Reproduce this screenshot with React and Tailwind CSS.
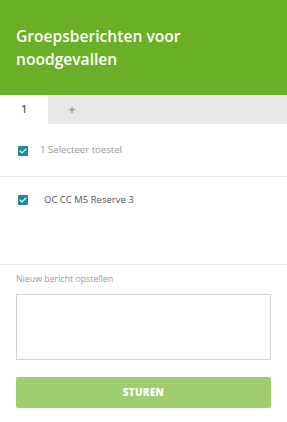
import { useState } from 'react';

function Check() {
  return (
    <span className="flex h-[10px] w-[10px] items-center justify-center rounded-[1px] bg-[#1b87ad]">
      <svg width="8" height="8" viewBox="0 0 8 8" fill="none">
        <path d="M1.3 4.2 L3.1 5.9 L6.7 2.2" stroke="white" strokeWidth="1.3" strokeLinecap="round" strokeLinejoin="round" />
      </svg>
    </span>
  );
}

export default function App() {
  const [message, setMessage] = useState('');

  return (
    <div className="flex h-[422px] w-[287px] flex-col bg-white font-['Open_Sans',sans-serif]">
      {/* Header */}
      <div className="flex h-[95px] items-center bg-[#69b027] px-4 pt-[1px]">
        <h1 className="text-[15.6px] font-semibold leading-[23px] text-white">
          Groepsberichten voor
          <br />
          noodgevallen
        </h1>
      </div>

      {/* Tabs */}
      <div className="flex h-[29px] bg-[#e8e8e8]">
        <div className="flex w-[48px] items-center justify-center bg-white text-[10px] font-semibold text-[#555]">1</div>
        <div className="flex w-[48px] items-center justify-center text-[13px] font-bold text-[#999]">+</div>
      </div>

      {/* Select all */}
      <div className="flex h-[53px] items-center gap-3 border-b border-[#e6e6e6] pl-[18px] pt-[1px]">
        <Check />
        <span className="text-[9.6px] font-medium text-[#999]">1 Selecteer toestel</span>
      </div>

      {/* Device list */}
      <div className="h-[88px] border-b border-[#e6e6e6] pl-[18px] pt-[16px]">
        <div className="flex items-center gap-4">
          <Check />
          <span className="text-[9.5px] text-[#555]">OC CC M5 Reserve 3</span>
        </div>
      </div>

      {/* Compose */}
      <div className="flex flex-col px-4 pt-[8px]">
        <label className="text-[8.8px] text-[#999]">Nieuw bericht opstellen</label>
        <textarea
          value={message}
          onChange={(e) => setMessage(e.target.value)}
          className="mt-[8px] h-[66px] w-full resize-none border border-[#d4d4d4] outline-none"
        />
        <button className="mt-[17px] h-[31px] w-full rounded-[2px] bg-[#a0cd6e] text-[10px] font-extrabold tracking-wide text-white">
          STUREN
        </button>
      </div>
    </div>
  );
}
